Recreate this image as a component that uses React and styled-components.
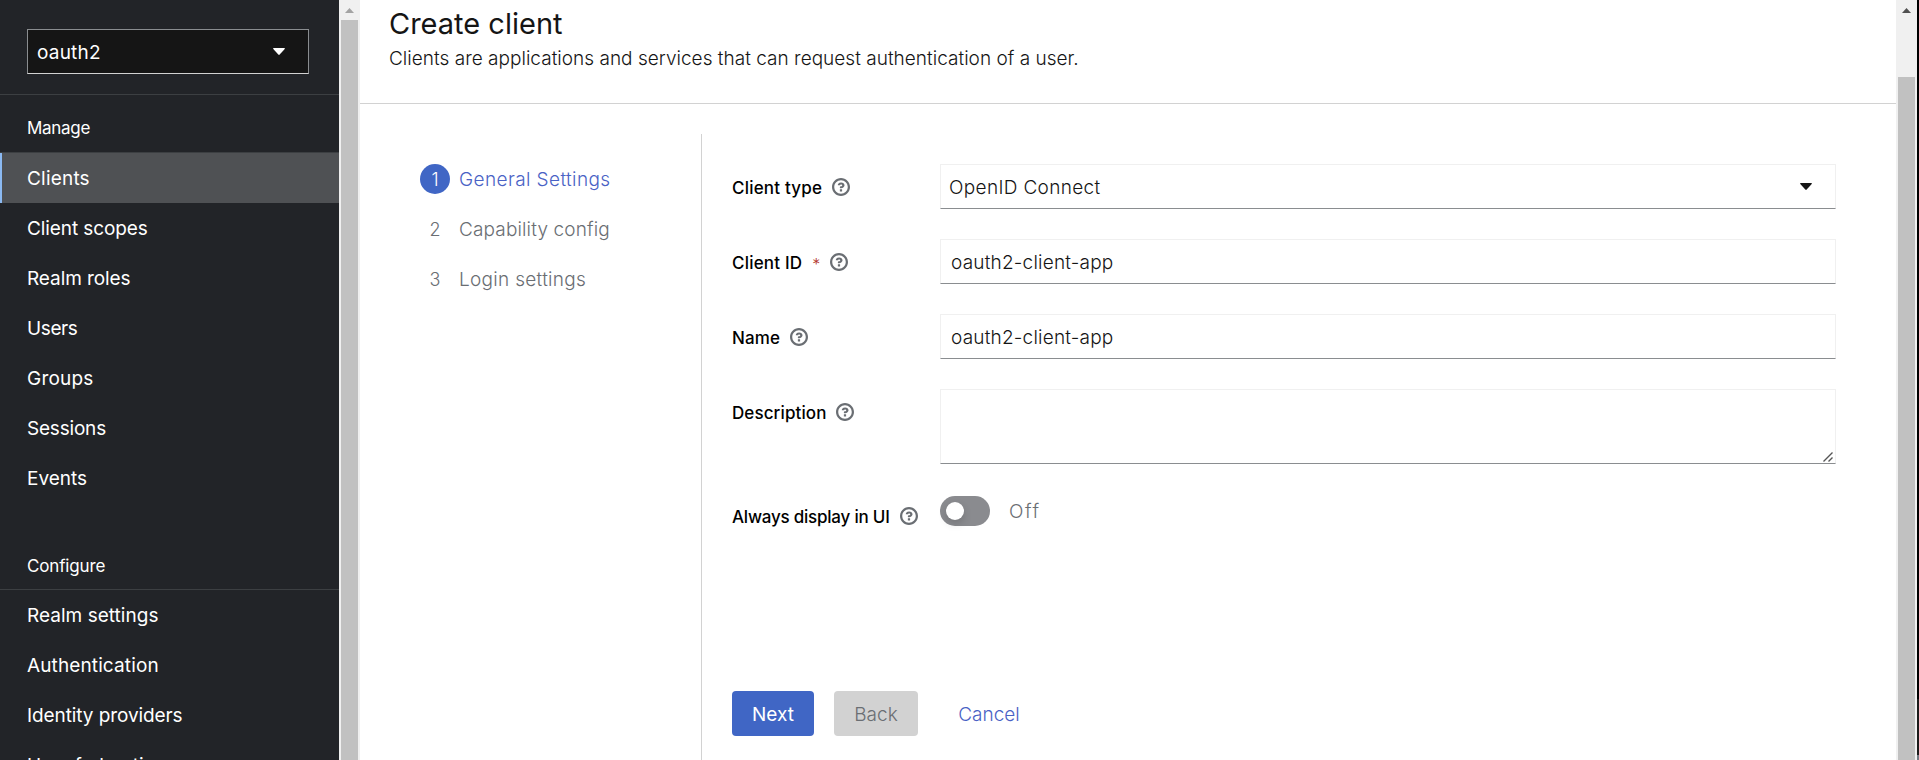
import React from "react";
import styled, { createGlobalStyle } from "styled-components";

const GlobalStyle = createGlobalStyle`
  *, *::before, *::after { box-sizing: border-box; }
  body {
    margin: 0;
    overflow: hidden;
    font-family: Inter, "Liberation Sans", sans-serif;
    font-size: 19px;
    color: #151515;
    background: #fff;
  }
  button, input, textarea { font: inherit; color: inherit; margin: 0; }
`;

/* Text run with its own tracking */
const Text = styled.span`
  letter-spacing: ${(p) => p.$track || 0}px;
  white-space: nowrap;
`;

const Page = styled.div`
  display: flex;
  width: 100vw;
  height: 760px;
  overflow: hidden;
`;

/* ---------- Sidebar ---------- */

const Sidebar = styled.nav`
  flex: 0 0 339px;
  height: 100%;
  overflow: hidden;
  background: #222428;
  color: #fff;
`;

const RealmArea = styled.div`
  height: 95px;
  padding: 29px 30px 0 27px;
  border-bottom: 1px solid #3c3f42;
`;

const RealmSelect = styled.button`
  display: flex;
  align-items: center;
  justify-content: space-between;
  width: 100%;
  height: 45px;
  padding: 2px 23px 0 9px;
  border: 1px solid #8a8d90;
  border-bottom-color: #d2d2d2;
  background: #151515;
  color: #fff;
`;

const NavGroup = styled.section`
  padding-top: ${(p) => p.$top}px;
`;

const NavHeading = styled.h2`
  display: flex;
  align-items: center;
  margin: 0;
  height: ${(p) => p.$height || 48}px;
  padding: 0 27px ${(p) => p.$bottom || 0}px;
  border-bottom: 1px solid #3c3f42;
  font-size: 17px;
  font-weight: 400;
`;

const NavItem = styled.a`
  display: flex;
  align-items: center;
  height: 50px;
  padding: 0 25px;
  border-left: 2px solid ${(p) => (p.$current ? "#8bb9f2" : "transparent")};
  background: ${(p) => (p.$current ? "#4f5154" : "transparent")};
`;

/* ---------- Scrollbars ---------- */

const ScrollTrack = styled.div`
  flex: 0 0 21px;
  display: flex;
  flex-direction: column;
  padding: 0 2px;
  background: #f0f0f0;
`;

const ScrollArrow = styled.svg`
  display: block;
  flex: 0 0 20px;
  width: 17px;
  height: 20px;
  fill: ${(p) => p.$tone};
`;

const ScrollThumb = styled.div`
  flex: 1;
  margin-top: ${(p) => p.$offset}px;
  background: #c1c1c1;
`;

const WindowEdge = styled.div`
  flex: 0 0 2px;
  background: linear-gradient(#000 699px, #1a1a1a 699px 755px, #6f7780 755px);
`;

/* ---------- Main ---------- */

const Main = styled.main`
  flex: 1;
  display: flex;
  flex-direction: column;
  min-width: 0;
`;

const Header = styled.header`
  height: 104px;
  padding: 4px 29px 0;
  border-bottom: 1px solid #d2d2d2;
`;

const Title = styled.h1`
  margin: 0;
  font-size: 29px;
  font-weight: 400;
  line-height: 39px;
`;

const Subtitle = styled.p`
  margin: 0;
  font-weight: 300;
  line-height: 32px;
`;

const Wizard = styled.div`
  flex: 1;
  display: flex;
  padding-top: 30px;
`;

const Steps = styled.ol`
  flex: 0 0 342px;
  margin: 0;
  padding: 30px 0 0 60px;
  list-style: none;
  border-right: 1px solid #d2d2d2;
`;

const Step = styled.li`
  display: flex;
  align-items: center;
  gap: 9px;
  height: 30px;
  margin-bottom: 20px;
  font-weight: 300;
  color: ${(p) => (p.$current ? "#4a62c5" : "#6a6e73")};
`;

const StepNumber = styled.span`
  display: grid;
  place-items: center;
  width: 30px;
  height: 30px;
  border-radius: 50%;
  font-size: 18px;
  background: ${(p) => (p.$current ? "#4066c5" : "transparent")};
  color: ${(p) => (p.$current ? "#fff" : "inherit")};
`;

const Content = styled.div`
  flex: 1;
  display: flex;
  flex-direction: column;
  padding: 30px 60px 24px 30px;
`;

const Form = styled.form`
  flex: 1;
  display: flex;
  flex-direction: column;
  gap: 30px;
`;

const Field = styled.div`
  display: grid;
  grid-template-columns: 208px 1fr;
`;

const Label = styled.label`
  display: flex;
  align-items: center;
  height: 24px;
  margin-top: ${(p) => p.$top || 12}px;
  font-size: 17px;
  font-weight: 500;
  color: #000;
`;

const Required = styled.span`
  align-self: flex-start;
  margin: 1px 0 0 10px;
  font-size: 16px;
  font-weight: 300;
  color: #b2332a;
  line-height: 24px;
`;

const HelpIcon = styled.svg`
  width: 18px;
  height: 18px;
  margin: 0 0 2px 10px;
  fill: #6a6e73;
`;

const controlBorder = `
  border: 1px solid #f0f0f0;
  border-bottom-color: #8a8d90;
  border-radius: 0;
  background: #fff;
  outline: 0;
`;

const Select = styled.button`
  ${controlBorder}
  display: flex;
  align-items: center;
  justify-content: space-between;
  height: 45px;
  padding: 2px 23px 0 8px;
  font-weight: 300;
`;

const Input = styled.input`
  ${controlBorder}
  width: 100%;
  height: 45px;
  padding: 2px 10px 0;
  font-weight: 300;
  letter-spacing: 0.2px;
`;

const AreaFrame = styled.div`
  ${controlBorder}
  display: flex;
  align-items: flex-end;
  height: 75px;
  padding: 0 2px 1px 0;
`;

const TextArea = styled.textarea`
  flex: 1;
  height: 100%;
  border: 0;
  padding: 6px 10px;
  outline: 0;
  resize: none;
  background: transparent;
`;

const Grip = styled.svg`
  width: 10px;
  height: 10px;
  stroke: #555;
  stroke-width: 1.4;
`;

const ToggleRow = styled.div`
  display: flex;
  align-items: center;
  gap: 19px;
  height: 30px;
  margin-top: 2px;
  font-weight: 300;
  color: #6a6e73;
`;

const Toggle = styled.span`
  display: flex;
  align-items: center;
  width: 50px;
  height: 30px;
  padding: 0 5.5px;
  border-radius: 15px;
  background: #8a8b8f;
`;

const Knob = styled.span`
  width: 18px;
  height: 18px;
  border-radius: 50%;
  background: #fff;
  box-shadow: 0 4px 8px rgba(3, 3, 3, 0.16);
`;

const Actions = styled.footer`
  display: flex;
  gap: 20px;
`;

const Button = styled.button`
  width: ${(p) => p.$width}px;
  height: 45px;
  padding: 1px 0 0;
  border: 0;
  border-radius: 4px;
  font-weight: ${(p) => (p.$kind === "primary" ? 400 : 300)};
  background: ${(p) =>
    ({ primary: "#4066c5", disabled: "#d2d2d2", link: "transparent" })[p.$kind]};
  color: ${(p) =>
    ({ primary: "#fff", disabled: "#6a6e73", link: "#4a62c5" })[p.$kind]};
`;

const Caret = styled.svg`
  width: 12px;
  height: 7px;
  margin-bottom: 3px;
  fill: currentColor;
`;

const DownCaret = () => (
  <Caret viewBox="0 0 12 7">
    <path d="M.6 0h10.8q.8.2.3.9L6.7 6.6q-.7.6-1.4 0L.3.9Q-.2.2.6 0z" />
  </Caret>
);

const Help = () => (
  <HelpIcon viewBox="0 0 1024 1024">
    <path d="M521.3 576c106.200 0 192.400-74 192.400-162.300 0-88.300-86.100-160.100-192.400-160.100-155.300 0-186.800 84.100-192.100 153.600 0 7.100 6 8.800 14.300 8.800H445c5.500 0 13-.5 15.800-9.500 0-43.900 122.100-49.400 122.100 7.100 0 28.300-26.700 57.300-61.600 59.400-34.900 2.100-74 6.800-74 48.700v32.100c0 17 8.800 22.200 24.700 22.200h49.300m54 175.300v-96c0-9-7-16-16-16h-96c-9 0-16 7-16 16v96c0 9 7 16 16 16h96c9 0 16-7 16-16M512 896C300.200 896 128 723.900 128 512c0-211.700 172.200-384 384-384s384 172.300 384 384c0 211.800-172.300 384-384 384m.1-896C229.700 0 0 229.800 0 512s229.700 512 512.100 512S1024 794.200 1024 512 794.400 0 512.100 0" />
  </HelpIcon>
);

const ScrollUp = ({ tone }) => (
  <ScrollArrow viewBox="0 0 17 20" $tone={tone}>
    <path d="M4 13L8.500 8L13 13z" />
  </ScrollArrow>
);

const manage = [
  ["Clients", 0.2],
  ["Client scopes", -0.1],
  ["Realm roles", -0.08],
  ["Users", -0.39],
  ["Groups", 0.2],
  ["Sessions", -0.2],
  ["Events", 0],
];

const configure = [
  ["Realm settings", 0.03],
  ["Authentication", 0.12],
  ["Identity providers", -0.09],
  ["User federation", 0],
];

const steps = [
  ["General Settings", 0.4],
  ["Capability config", 0.14],
  ["Login settings", 0.3],
];

export default function App() {
  return (
    <>
      <GlobalStyle />
      <Page>
        <Sidebar>
          <RealmArea>
            <RealmSelect>
              <Text $track={0.2}>oauth2</Text>
              <DownCaret />
            </RealmSelect>
          </RealmArea>
          <NavGroup $top={10}>
            <NavHeading $bottom={2}>
              <Text $track={-0.3}>Manage</Text>
            </NavHeading>
            {manage.map(([name, track], i) => (
              <NavItem key={name} $current={i === 0}>
                <Text $track={track}>{name}</Text>
              </NavItem>
            ))}
          </NavGroup>
          <NavGroup $top={39}>
            <NavHeading>
              <Text $track={-0.15}>Configure</Text>
            </NavHeading>
            {configure.map(([name, track]) => (
              <NavItem key={name}>
                <Text $track={track}>{name}</Text>
              </NavItem>
            ))}
          </NavGroup>
        </Sidebar>
        <ScrollTrack>
          <ScrollUp tone="#a3a3a3" />
          <ScrollThumb $offset={0} />
        </ScrollTrack>

        <Main>
          <Header>
            <Title>
              <Text>Create client</Text>
            </Title>
            <Subtitle>
              <Text $track={0.02}>
                Clients are applications and services that can request authentication of a user.
              </Text>
            </Subtitle>
          </Header>
          <Wizard>
            <Steps>
              {steps.map(([name, track], i) => (
                <Step key={name} $current={i === 0}>
                  <StepNumber $current={i === 0}>{i + 1}</StepNumber>
                  <Text $track={track}>{name}</Text>
                </Step>
              ))}
            </Steps>
            <Content>
              <Form>
                <Field>
                  <Label>
                    <Text $track={0.2}>Client type</Text>
                    <Help />
                  </Label>
                  <Select type="button">
                    <Text $track={0.34}>OpenID Connect</Text>
                    <DownCaret />
                  </Select>
                </Field>
                <Field>
                  <Label>
                    <Text $track={0.2}>Client ID</Text>
                    <Required>*</Required>
                    <Help />
                  </Label>
                  <Input defaultValue="oauth2-client-app" />
                </Field>
                <Field>
                  <Label>
                    <Text $track={0.1}>Name</Text>
                    <Help />
                  </Label>
                  <Input defaultValue="oauth2-client-app" />
                </Field>
                <Field>
                  <Label>
                    <Text $track={0.1}>Description</Text>
                    <Help />
                  </Label>
                  <AreaFrame>
                    <TextArea />
                    <Grip viewBox="0 0 10 10">
                      <path d="M.5 9.500L9.500.5M5.500 9.500L9.500 5.500" />
                    </Grip>
                  </AreaFrame>
                </Field>
                <Field>
                  <Label $top={11}>
                    <Text $track={-0.22}>Always display in UI</Text>
                    <Help />
                  </Label>
                  <ToggleRow>
                    <Toggle>
                      <Knob />
                    </Toggle>
                    <Text $track={1.6}>Off</Text>
                  </ToggleRow>
                </Field>
              </Form>
              <Actions>
                <Button $kind="primary" $width={82}>
                  <Text>Next</Text>
                </Button>
                <Button $kind="disabled" $width={84}>
                  <Text>Back</Text>
                </Button>
                <Button $kind="link" $width={102}>
                  <Text>Cancel</Text>
                </Button>
              </Actions>
            </Content>
          </Wizard>
        </Main>

        <ScrollTrack>
          <ScrollUp tone="#505050" />
          <ScrollThumb $offset={57} />
        </ScrollTrack>
        <WindowEdge />
      </Page>
    </>
  );
}
